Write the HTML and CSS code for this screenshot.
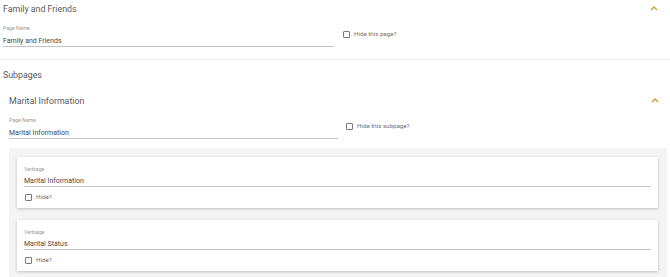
FILE: index.html
```html
<!DOCTYPE html>
<html>
<head>
<meta charset="utf-8">
<link rel="stylesheet" href="styles.css">
</head>
<body>
<div class="page">
  <div class="panel-head top">
    <span class="title">Family and Friends</span>
    <svg class="chev" width="8" height="6" viewBox="0 0 8 6"><path d="M1 5 L4 2 L7 5" fill="none" stroke="#d4a020" stroke-width="1.4"/></svg>
  </div>
  <div class="row top-row">
    <div class="field main-field">
      <div class="label">Page Name</div>
      <div class="value">Family and Friends</div>
    </div>
    <div class="check"><span class="box"></span><span>Hide this page?</span></div>
  </div>
  <div class="divider"></div>
  <div class="title subpages">Subpages</div>
  <div class="sub">
    <div class="panel-head sub-head">
      <span class="title">Marital Information</span>
      <svg class="chev" width="8" height="6" viewBox="0 0 8 6"><path d="M1 5 L4 2 L7 5" fill="none" stroke="#d4a020" stroke-width="1.4"/></svg>
    </div>
    <div class="row sub-row">
      <div class="field sub-field">
        <div class="label">Page Name</div>
        <div class="value">Marital Information</div>
      </div>
      <div class="check"><span class="box"></span><span>Hide this subpage?</span></div>
    </div>
    <div class="grey">
      <div class="card">
        <div class="field">
          <div class="label">Verbiage</div>
          <div class="value">Marital Information</div>
        </div>
        <div class="check card-check"><span class="box"></span><span>Hide?</span></div>
      </div>
      <div class="card">
        <div class="field">
          <div class="label">Verbiage</div>
          <div class="value">Marital Status</div>
        </div>
        <div class="check card-check"><span class="box"></span><span>Hide?</span></div>
      </div>
    </div>
  </div>
</div>
</body>
</html>
```
FILE: styles.css
```css
* { box-sizing: border-box; }
html, body { margin: 0; padding: 0; background: #fff; }
body {
  font-family: Roboto, "Liberation Sans", Arial, sans-serif;
  color: #555;
  width: 670px;
  height: 277px;
  overflow: hidden;
}
.page { padding-left: 3px; }
.title {
  font-size: 8.8px;
  line-height: 18px;
  color: #5a5a5a;
}
.panel-head {
  display: flex;
  align-items: center;
  justify-content: space-between;
  height: 18px;
  padding-right: 12px;
}
.panel-head.top .chev { margin-top: -3px; }
.chev { display: block; }
.row {
  display: flex;
  align-items: flex-start;
}
.top-row { margin-top: 7px; }
.field { display: flex; flex-direction: column; }
.label {
  font-size: 5.2px;
  line-height: 6px;
  color: #9a9a9a;
}
.value {
  margin-top: 5px;
  font-size: 7px;
  line-height: 10px;
  color: #4a4a4a;
  border-bottom: 1px solid #c4c4c4;
}
.main-field { width: 331px; }
.check {
  display: flex;
  align-items: center;
  gap: 4px;
  font-size: 6.2px;
  color: #707070;
  line-height: 7px;
}
.top-row .check { margin-left: 9px; margin-top: 6px; }
.box {
  display: block;
  width: 7px;
  height: 7px;
  border: 1px solid #7a7a7a;
  border-radius: 1px;
}
.divider {
  height: 1px;
  background: #ececec;
  margin: 12px 0 0 -3px;
  width: 670px;
}
.subpages { display: block; margin-top: 6px; }
.sub { padding-left: 6px; margin-top: 8px; }
.sub-head .chev { margin-top: -2px; }
.sub-head { padding-right: 11px; }
.sub-row { margin-top: 7px; }
.sub-field { width: 329px; }
.sub-field .value { margin-top: 5px; }
.sub-row .check { margin-left: 8px; margin-top: 6px; }
.grey {
  margin-top: 9px;
  width: 658px;
  background: #f4f4f4;
  padding: 9px 9px 12px 8px;
  display: flex;
  flex-direction: column;
  gap: 12px;
}
.card {
  background: #fff;
  box-shadow: 0 1px 3px rgba(0,0,0,0.22);
  padding: 9px 7px 7px 7px;
}
.card .value { margin-top: 4px; }
.card-check { margin-top: 7px; margin-left: 1px; }
```
